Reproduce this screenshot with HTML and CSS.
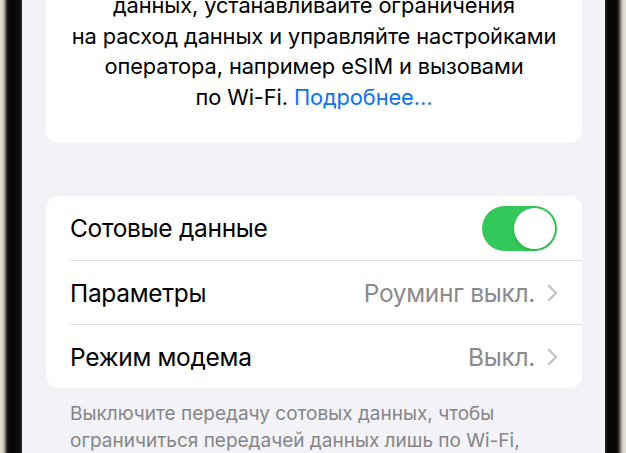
FILE: index.html
```html
<!DOCTYPE html>
<html lang="ru">
<head>
  <meta charset="UTF-8">
  <meta name="viewport" content="width=device-width, initial-scale=1.0">
  <title>Сотовая связь</title>
  <link rel="stylesheet" href="styles.css">
</head>
<body>
  <div class="phone">
    <div class="bezel bezel-left"></div>

    <main class="screen">
      <section class="intro-card">
        <p>данных, устанавливайте ограничения<br>
          на расход данных и управляйте настройками<br>
          оператора, например eSIM и вызовами<br>
          по Wi-Fi. <a href="#">Подробнее…</a></p>
      </section>

      <section class="group">
        <div class="row">
          <span class="label">Сотовые данные</span>
          <span class="toggle on"><span class="knob"></span></span>
        </div>
        <div class="row">
          <span class="label">Параметры</span>
          <span class="value">Роуминг выкл.</span>
          <svg class="chevron" viewBox="0 0 12 20"><path d="M2 2l8 8-8 8"/></svg>
        </div>
        <div class="row">
          <span class="label">Режим модема</span>
          <span class="value">Выкл.</span>
          <svg class="chevron" viewBox="0 0 12 20"><path d="M2 2l8 8-8 8"/></svg>
        </div>
      </section>

      <p class="footnote">Выключите передачу сотовых данных, чтобы<br>
        ограничиться передачей данных лишь по Wi-Fi,<br>
        включая электронную почту, веб-страницы и push-уведомления.</p>
    </main>

    <div class="bezel bezel-right"></div>
  </div>
</body>
</html>
```

FILE: styles.css
```css
html, body {
  margin: 0;
  padding: 0;
  height: 100%;
  overflow: hidden;
}

body {
  font-family: Inter, "Noto Sans", sans-serif;
  color: #000;
  background: #000;
}

.phone {
  display: flex;
  height: 100%;
}

.bezel-left {
  width: 22px;
  background: linear-gradient(to right, #e2ded5 0, #d6d2c8 3px, #8b8880 5px, #1c1c1c 7px, #050505 10px, #0b0b0b 19px, #2a2a2a 22px);
}

.bezel-right {
  width: 21px;
  background: linear-gradient(to right, #2a2a2a 0, #050505 3px, #080808 12px, #3a3a38 14px, #9a978f 16px, #d8d4ca 18px, #e6e2d8 21px);
}

.screen {
  flex: 1;
  background: #f2f2f7;
  padding: 0 23px 0 24px;
  overflow: hidden;
}

.intro-card {
  background: #fff;
  border-radius: 0 0 13px 13px;
  margin-top: -10px;
  padding: 0 4px 31px;
  text-align: center;
}

.intro-card p {
  margin: 0;
  font-size: 21.8px;
  line-height: 30.5px;
  letter-spacing: -0.1px;
  white-space: nowrap;
}

.intro-card a {
  color: #0a72f5;
  text-decoration: none;
}

.group {
  background: #fff;
  border-radius: 13px;
  margin-top: 53px;
  padding-left: 24px;
}

.row {
  display: flex;
  align-items: center;
  height: 63px;
  padding-right: 24px;
  border-top: 1px solid #dcdce0;
}

.row:first-child {
  height: 64px;
  border-top: none;
}

.label {
  flex: 1;
  font-size: 24.5px;
  letter-spacing: -0.3px;
}

.value {
  font-size: 24.5px;
  letter-spacing: -0.3px;
  color: #8a8a8e;
  margin-right: 12px;
}

.chevron {
  width: 11px;
  height: 18px;
  fill: none;
  stroke: #c4c4c7;
  stroke-width: 2.6;
  stroke-linecap: round;
  stroke-linejoin: round;
}

.toggle {
  display: flex;
  width: 75px;
  height: 45px;
  border-radius: 23px;
  background: #e9e9eb;
  padding: 2px;
  box-sizing: border-box;
  margin-right: 1px;
}

.toggle.on {
  background: #34c759;
  justify-content: flex-end;
}

.knob {
  width: 41px;
  height: 41px;
  border-radius: 50%;
  background: #fff;
  box-shadow: 0 2px 4px rgba(0, 0, 0, 0.12);
}

.footnote {
  margin: 12px 0 0;
  padding: 0 24px;
  font-size: 19px;
  line-height: 27px;
  color: #858589;
  white-space: nowrap;
}
```
